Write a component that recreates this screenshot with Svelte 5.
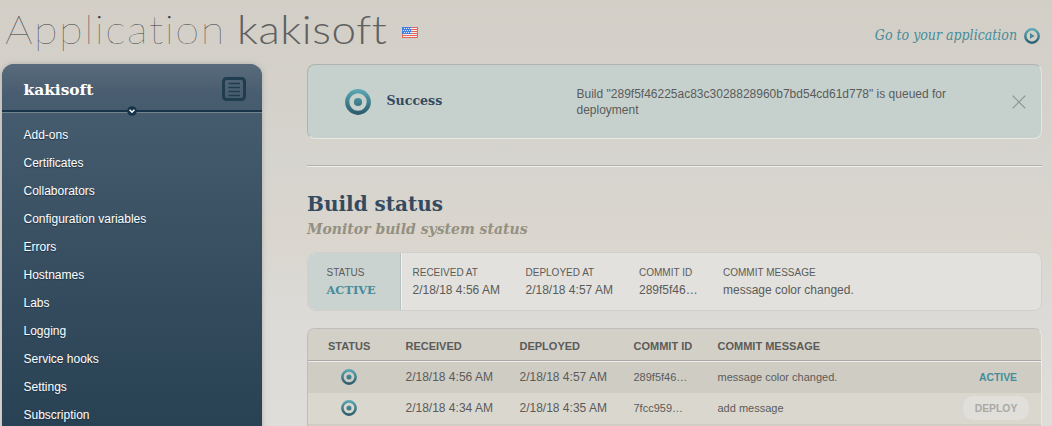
<script>
  const menu = ['Add-ons', 'Certificates', 'Collaborators', 'Configuration variables', 'Errors', 'Hostnames', 'Labs', 'Logging', 'Service hooks', 'Settings', 'Subscription'];
  const summary = [
    ['RECEIVED AT', '2/18/18 4:56 AM'],
    ['DEPLOYED AT', '2/18/18 4:57 AM'],
    ['COMMIT ID', '289f5f46…'],
    ['COMMIT MESSAGE', 'message color changed.']
  ];
  const builds = [
    { received: '2/18/18 4:56 AM', deployed: '2/18/18 4:57 AM', id: '289f5f46…', message: 'message color changed.', active: true },
    { received: '2/18/18 4:34 AM', deployed: '2/18/18 4:35 AM', id: '7fcc959…', message: 'add message', active: false }
  ];
</script>

{#snippet target(size)}
  <svg class="target" width={size} height={size} viewBox="0 0 26 26">
    <defs>
      <linearGradient id="teal" gradientUnits="userSpaceOnUse" x1="0" y1="0" x2="0" y2="26">
        <stop offset="0" stop-color="#5caab5" />
        <stop offset="1" stop-color="#2a5868" />
      </linearGradient>
    </defs>
    <circle cx="13" cy="13" r="10.8" fill="none" stroke="url(#teal)" stroke-width="4.2" />
    <circle cx="13" cy="13" r="4.1" fill="url(#teal)" />
  </svg>
{/snippet}

<div class="page">
  <header>
    <h1><span class="thin">Application</span> <span class="name">kakisoft</span></h1>
    <svg class="flag" width="16" height="11" viewBox="0 0 16 11">
      <rect width="16" height="11" fill="#f4eeee" />
      <path d="M0 .5H16M8 2.5H16M8 4.5H16M8 6.5H16M0 8.5H16M0 10.5H16" stroke="#e56458" />
      <path d="M.5 0V11M15.5 0V11" stroke="#d96b5c" />
      <rect width="9" height="7" fill="#477fe0" />
      <path d="M2 1.5H9M1 3.5H8M2 5.5H9" stroke="#dceaff" stroke-dasharray="1 1" />
    </svg>
    <a class="goto" href="#app">
      <span>Go to your application</span>
      <svg width="16" height="16" viewBox="0 0 16 16">
        <circle cx="8" cy="8" r="6.7" fill="none" stroke="url(#teal-play)" stroke-width="2.5" />
        <path d="M6 5.1L10.6 8L6 10.8Z" fill="#438996" />
        <defs>
          <linearGradient id="teal-play" x1="0" y1="0" x2="0" y2="1">
            <stop offset="0" stop-color="#5caab5" />
            <stop offset="1" stop-color="#2f6274" />
          </linearGradient>
        </defs>
      </svg>
    </a>
  </header>

  <div class="columns">
    <aside>
      <div class="side-head">
        <strong>kakisoft</strong>
        <svg class="list" width="24" height="24" viewBox="0 0 24 24">
          <rect x="1.5" y="1.5" width="21" height="21" rx="3" fill="none" stroke="#203d50" stroke-width="3" />
          <path d="M6.5 6.5H18M6.5 10.5H18M6.5 14.5H18M6.5 18.5H18" stroke="#203d50" stroke-width="1.6" />
        </svg>
        <svg class="chevron" width="10" height="10" viewBox="0 0 10 10">
          <circle cx="5" cy="5" r="4.8" fill="#163348" />
          <path d="M2.6 3.8L5 6.2L7.4 3.8" fill="none" stroke="#fff" stroke-width="1.6" />
        </svg>
      </div>
      <nav>
        {#each menu as item}<a href="#app">{item}</a>{/each}
      </nav>
    </aside>

    <main>
      <section class="notice">
        {@render target(26)}
        <strong>Success</strong>
        <p>Build "289f5f46225ac83c3028828960b7bd54cd61d778" is queued for deployment</p>
        <svg class="close" width="14" height="14" viewBox="0 0 14 14">
          <path d="M.7 .7L13.3 13.3M13.3 .7L.7 13.3" stroke="#899491" stroke-width="1.2" />
        </svg>
      </section>
      <hr />
      <h2>Build status</h2>
      <h3>Monitor build system status</h3>

      <section class="summary">
        <div class="state"><span class="label">STATUS</span><b>ACTIVE</b></div>
        {#each summary as [label, value]}
          <div class="fact"><span class="label">{label}</span><span class="value">{value}</span></div>
        {/each}
      </section>

      <section class="table">
        <div class="row head">
          <span>STATUS</span><span>RECEIVED</span><span>DEPLOYED</span><span>COMMIT ID</span><span>COMMIT MESSAGE</span>
        </div>
        {#each builds as build}
          <div class="row" class:current={build.active}>
            <span class="icon">{@render target(16)}</span>
            <span>{build.received}</span>
            <span>{build.deployed}</span>
            <span class="small">{build.id}</span>
            <span class="small">{build.message}</span>
            <span class="action" class:on={build.active}>{build.active ? 'ACTIVE' : 'DEPLOY'}</span>
          </div>
        {/each}
        <div class="row current"></div>
      </section>
    </main>
  </div>
</div>

<style>
  :global(body) { overflow: hidden; }
  .page {
    box-sizing: border-box; width: 1052px; height: 426px; overflow: hidden;
    font-family: "Liberation Sans", Arial, sans-serif; font-size: 12px; color: #5b5b59;
    background: linear-gradient(#d3cfc7 0, #d4d1ca 90px, #d6d4ce 160px, #dad6ce 240px, #dbdad6 300px, #dedddA 426px);
  }
  a { text-decoration: none; }
  svg { display: block; flex: none; }
  h1, h2, h3, p { margin: 0; }
  header { height: 64px; display: flex; align-items: flex-start; padding-left: 5px; box-sizing: border-box; }
  h1 { display: flex; font-family: Lato, sans-serif; font-size: 40px; line-height: 48px; font-weight: 300; padding-top: 5px; white-space: nowrap; }
  h1 span { transform-origin: 0 50%; }
  .thin { width: 232px; font-weight: 100; letter-spacing: 1.4px; color: #35393b; transform: scaleX(1.085); }
  .name { width: 165px; color: #606060; letter-spacing: .5px; transform: scaleX(1.1); }
  .flag { margin-top: 27px; }
  .goto { display: flex; gap: 7px; margin: 28px 12px 0 auto; color: #468c9a; }
  .goto span { font: italic 14px/15px "DejaVu Serif Condensed", "DejaVu Serif", serif; white-space: nowrap; }
  .columns { display: flex; align-items: flex-start; padding-left: 2px; }
  aside { width: 260px; height: 380px; border-radius: 12px 12px 0 0; background: linear-gradient(#455b6e 48px, #284153 362px); box-shadow: 0 0 5px #8b8b8788; }
  .side-head {
    box-sizing: border-box; position: relative; height: 49px; display: flex; align-items: center; justify-content: space-between;
    padding: 1px 16px 0 21.5px; border-radius: 12px 12px 0 0;
    background: linear-gradient(#596b7c, #495d70 30px, #465b6d);
    border-bottom: 1px solid #71848c; box-shadow: inset 0 -2px #183448;
  }
  .side-head strong { padding-top: 2px; font: bold 15.4px/20px "DejaVu Serif", serif; color: #fff; }
  .chevron { position: absolute; left: 125px; top: 42px; }
  nav { display: flex; flex-direction: column; padding: 8px 0 0 21.5px; }
  nav a { color: #fff; line-height: 28px; text-shadow: 0 1px 1px #1d3444; }
  main { width: 735px; margin-left: 45px; }
  .notice {
    box-sizing: border-box; height: 75px; display: flex; align-items: center; padding: 0 15px 0 37px; border: 1px solid;
    border-color: #b0b3af #e4e5e2 #e8e8e4 #b0b3af; border-radius: 8px; background: #c6d1ce;
  }
  .notice strong { width: 190px; margin-left: 15.5px; padding-bottom: 1px; font: bold 12.6px/20px "DejaVu Serif", serif; color: #344a60; }
  .notice p { width: 400px; line-height: 16px; }
  .close { margin-left: auto; }
  hr { height: 0; margin: 26px 0 0; border: 0; border-top: 1px solid #b1b0ae; border-bottom: 1px solid #efefec; }
  h2 { margin-top: 23px; font: bold 20px/28px "DejaVu Serif", serif; color: #344a60; white-space: nowrap; }
  h3 { margin-top: 1px; font: italic bold 14px/20px "DejaVu Serif", serif; color: #959080; white-space: nowrap; }
  .summary {
    box-sizing: border-box; height: 59px; margin-top: 13px; display: grid; grid-template-columns: 93px 113px 113.5px 84px 1fr;
    border: 1px solid #d1d0cc; border-radius: 8px; background: #e2e1dd; overflow: hidden;
  }
  .summary > div { display: flex; flex-direction: column; padding: 11px 0 0 11.5px; white-space: nowrap; }
  .summary > .state { padding-left: 18.5px; background: #cbd3d1; border-right: 1px solid #b6c2c1; box-shadow: 1px 0 #f0f0ed; box-sizing: border-box; }
  .label { font-size: 10px; line-height: 18px; }
  .value, .state b { line-height: 16px; }
  .state b { font-family: "DejaVu Serif", serif; font-size: 11.4px; color: #468c9a; }
  .table {
    margin-top: 17px; border: 1px solid; border-color: #bdbdb9 #e9e8e4 #e9e8e4 #bdbdb9; border-radius: 8px 8px 0 0; overflow: hidden;
  }
  .row {
    display: grid; grid-template-columns: 97.5px 114px 114px 84px 1fr auto; align-items: center; height: 31px; box-sizing: border-box;
    padding-right: 12px; background: #dad7cf; white-space: nowrap;
  }
  .row:not(.head) { padding-bottom: 1px; }
  .current { background: #cfccc4; }
  .head { height: 33px; padding-top: 1px; font-size: 11px; font-weight: bold; background: #d3d0c8; border-bottom: 1px solid #efeeeb; box-shadow: inset 0 -1px #aaa9a6; }
  .head span:first-child { padding-left: 20px; }
  .icon { padding-left: 33px; }
  .small { font-size: 11px; }
  .action { box-sizing: border-box; width: 66px; height: 24px; line-height: 26px; text-align: center; border-radius: 10px; font-size: 10.4px; font-weight: bold; color: #aaaaa5; background: #e0dfda; }
  .action.on { color: #468c9a; background: none; padding-left: 4px; }
</style>
